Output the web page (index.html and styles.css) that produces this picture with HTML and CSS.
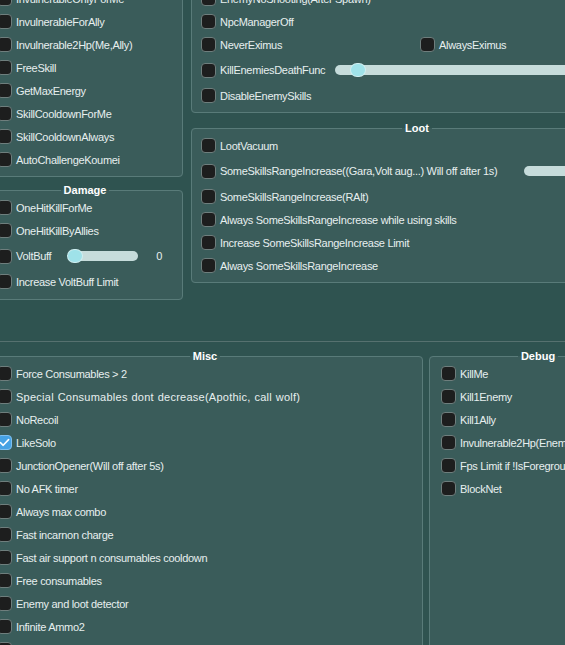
FILE: index.html
```html
<!DOCTYPE html>
<html>
<head>
<meta charset="utf-8">
<link rel="stylesheet" href="styles.css">
</head>
<body>
<div class="page">
  <div class="top">
    <div class="col">
      <fieldset class="panel p-a">
        <div class="row"><span class="cb"></span><span class="lbl">InvulnerableOnlyForMe</span></div>
        <div class="row"><span class="cb"></span><span class="lbl">InvulnerableForAlly</span></div>
        <div class="row"><span class="cb"></span><span class="lbl">Invulnerable2Hp(Me,Ally)</span></div>
        <div class="row"><span class="cb"></span><span class="lbl">FreeSkill</span></div>
        <div class="row"><span class="cb"></span><span class="lbl">GetMaxEnergy</span></div>
        <div class="row"><span class="cb"></span><span class="lbl">SkillCooldownForMe</span></div>
        <div class="row"><span class="cb"></span><span class="lbl">SkillCooldownAlways</span></div>
        <div class="row"><span class="cb"></span><span class="lbl">AutoChallengeKoumei</span></div>
      </fieldset>
      <fieldset class="panel titled p-damage">
        <legend>Damage</legend>
        <div class="row"><span class="cb"></span><span class="lbl">OneHitKillForMe</span></div>
        <div class="row"><span class="cb"></span><span class="lbl">OneHitKillByAllies</span></div>
        <div class="row sl"><span class="cb"></span><span class="lbl">VoltBuff</span><span class="slider s-volt"><span class="thumb" style="left:0px"></span></span><span class="val">0</span></div>
        <div class="row"><span class="cb"></span><span class="lbl">Increase VoltBuff Limit</span></div>
      </fieldset>
    </div>
    <div class="col">
      <fieldset class="panel p-b">
        <div class="row"><span class="cb"></span><span class="lbl">EnemyNoShooting(After Spawn)</span></div>
        <div class="row"><span class="cb"></span><span class="lbl">NpcManagerOff</span></div>
        <div class="row"><span class="cell"><span class="cb"></span><span class="lbl">NeverEximus</span></span><span class="cb"></span><span class="lbl">AlwaysEximus</span></div>
        <div class="row sl"><span class="cb"></span><span class="lbl">KillEnemiesDeathFunc</span><span class="slider s-kill"><span class="thumb" style="left:16px"></span></span></div>
        <div class="row"><span class="cb"></span><span class="lbl">DisableEnemySkills</span></div>
      </fieldset>
      <fieldset class="panel titled p-loot">
        <legend>Loot</legend>
        <div class="row"><span class="cb"></span><span class="lbl">LootVacuum</span></div>
        <div class="row sl"><span class="cb"></span><span class="lbl">SomeSkillsRangeIncrease((Gara,Volt aug...) Will off after 1s)</span><span class="slider s-loot"><span class="thumb" style="left:60px"></span></span></div>
        <div class="row"><span class="cb"></span><span class="lbl">SomeSkillsRangeIncrease(RAlt)</span></div>
        <div class="row"><span class="cb"></span><span class="lbl">Always SomeSkillsRangeIncrease while using skills</span></div>
        <div class="row"><span class="cb"></span><span class="lbl">Increase SomeSkillsRangeIncrease Limit</span></div>
        <div class="row"><span class="cb"></span><span class="lbl">Always SomeSkillsRangeIncrease</span></div>
      </fieldset>
    </div>
  </div>
  <div class="sep"></div>
  <div class="bottom">
    <fieldset class="panel titled p-misc">
      <legend>Misc</legend>
      <div class="row"><span class="cb"></span><span class="lbl">Force Consumables &gt; 2</span></div>
      <div class="row"><span class="cb"></span><span class="lbl wide">Special Consumables dont decrease(Apothic, call wolf)</span></div>
      <div class="row"><span class="cb"></span><span class="lbl">NoRecoil</span></div>
      <div class="row"><span class="cb on"><svg viewBox="0 0 15 15" width="15" height="15"><path d="M3.4 7.6 L6.2 10.3 L11.6 4.6" fill="none" stroke="#ffffff" stroke-width="1.6" stroke-linecap="round" stroke-linejoin="round"/></svg></span><span class="lbl">LikeSolo</span></div>
      <div class="row"><span class="cb"></span><span class="lbl">JunctionOpener(Will off after 5s)</span></div>
      <div class="row"><span class="cb"></span><span class="lbl">No AFK timer</span></div>
      <div class="row"><span class="cb"></span><span class="lbl">Always max combo</span></div>
      <div class="row"><span class="cb"></span><span class="lbl">Fast incarnon charge</span></div>
      <div class="row"><span class="cb"></span><span class="lbl">Fast air support n consumables cooldown</span></div>
      <div class="row"><span class="cb"></span><span class="lbl">Free consumables</span></div>
      <div class="row"><span class="cb"></span><span class="lbl">Enemy and loot detector</span></div>
      <div class="row"><span class="cb"></span><span class="lbl">Infinite Ammo2</span></div>
      <div class="row"><span class="cb"></span><span class="lbl">NoReload</span></div>
    </fieldset>
    <fieldset class="panel titled p-debug">
      <legend>Debug</legend>
      <div class="row"><span class="cb"></span><span class="lbl">KillMe</span></div>
      <div class="row"><span class="cb"></span><span class="lbl">Kill1Enemy</span></div>
      <div class="row"><span class="cb"></span><span class="lbl">Kill1Ally</span></div>
      <div class="row"><span class="cb"></span><span class="lbl">Invulnerable2Hp(Enemy)</span></div>
      <div class="row"><span class="cb"></span><span class="lbl">Fps Limit if !IsForeground</span></div>
      <div class="row"><span class="cb"></span><span class="lbl">BlockNet</span></div>
    </fieldset>
  </div>
</div>
</body>
</html>
```

FILE: styles.css
```css
html, body {
  margin: 0;
  padding: 0;
  height: 100%;
  overflow: hidden;
  background: #2f5350;
}

body {
  font-family: "Liberation Sans", Arial, sans-serif;
  font-size: 11px;
  color: #e7efef;
}

.page {
  margin: -19px 0 0 -13px;
  width: 658px;
}

.top {
  display: grid;
  grid-template-columns: 196px 452px;
  column-gap: 8px;
  align-items: start;
}

.col {
  display: flex;
  flex-direction: column;
}

.panel {
  margin: 0;
  min-width: 0;
  box-sizing: border-box;
  border: 1px solid #597b79;
  border-radius: 4px;
  background: #3a5c5a;
  padding: 9px 9px 9px 9px;
  display: flex;
  flex-direction: column;
  justify-content: flex-start;
  gap: 8px;
}

.panel.titled {
  padding-top: 3px;
}

.panel legend {
  margin: 0 auto;
  padding: 0 3px;
  font-weight: bold;
  color: #ffffff;
  font-size: 11px;
  line-height: 14px;
  letter-spacing: 0;
}

.p-damage {
  margin-top: 6px;
  padding-bottom: 10px;
}

.p-loot {
  margin-top: 8px;
  padding-top: 2px;
}

.row {
  display: flex;
  align-items: center;
  height: 15px;
  flex: none;
  white-space: nowrap;
}

.row.sl {
  height: 20px;
}

.cell {
  display: flex;
  align-items: center;
  width: 219px;
  flex: none;
}

.cb {
  width: 15px;
  height: 15px;
  box-sizing: border-box;
  border: 1px solid #6e7e7d;
  border-radius: 4px;
  background: #1d1e1e;
  flex: none;
  margin-right: 4px;
  display: flex;
}

.cb.on {
  background: #46a2e4;
  border-color: #7fbfee;
}

.cb.on svg {
  margin: -1px;
}

.lbl {
  letter-spacing: -0.3px;
}

.lbl.wide {
  letter-spacing: 0.25px;
  word-spacing: 0.5px;
}

.slider {
  position: relative;
  height: 10px;
  border-radius: 5px;
  background: #c6dcdb;
  flex: none;
  margin-left: 12px;
}

.s-volt {
  width: 70px;
  margin-left: 17px;
}

.s-kill {
  width: 290px;
  margin-left: 10px;
}

.s-loot {
  width: 108px;
  margin-left: 27px;
}

.thumb {
  position: absolute;
  top: -1px;
  width: 14px;
  height: 12px;
  border-radius: 6px;
  background: #9fe2e9;
  box-shadow: 0 0 0 1px #cdeef0;
}

.val {
  margin-left: 18px;
}

.sep {
  margin-top: 41px;
  height: 1px;
  background: #56716f;
}

.bottom {
  margin-top: 7px;
  display: grid;
  grid-template-columns: 436px 216px;
  column-gap: 6px;
  align-items: stretch;
}

.p-debug {
  padding-left: 11px;
}
```
